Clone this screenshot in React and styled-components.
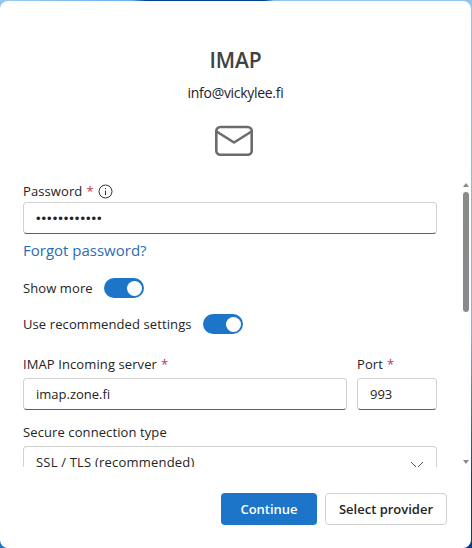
import React from "react"
import styled, { createGlobalStyle } from "styled-components"

const ACCENT = "#1c75c9"

const Required = () => <Star>*</Star>

const MailIcon = () => (
  <svg width="40" height="32" viewBox="0 0 40 32" fill="none" stroke="#6b6b6b" strokeWidth="2.6">
    <rect x="2.3" y="2" width="35.4" height="27.8" rx="4" />
    <path d="M2.5 6.5 L20 17.5 L37.5 6.5" strokeLinejoin="round" />
  </svg>
)

const InfoIcon = () => (
  <svg width="15" height="15" viewBox="0 0 15 15" fill="none" stroke="#333" strokeWidth="1">
    <circle cx="7.5" cy="7.5" r="6.5" />
    <path d="M7.5 6.6 V11" />
    <path d="M7.5 4 V5" />
  </svg>
)

const Chevron = () => (
  <svg width="14" height="8" viewBox="0 0 14 8" fill="none" stroke="#555" strokeWidth="1">
    <path d="M1 1 L7 7 L13 1" />
  </svg>
)

const App = () => (
  <>
    <GlobalStyle />
    <Window>
      <Card>
        <Header>
          <Title>IMAP</Title>
          <Email>info@vickylee.fi</Email>
          <IconWrap><MailIcon /></IconWrap>
        </Header>

        <ScrollArea>
          <Form>
            <Label $tight>Password <Required /> <InfoIcon /></Label>
            <Input><Dots>••••••••••••</Dots></Input>
            <ForgotLink>Forgot password?</ForgotLink>

            <ToggleRow $mt={17}>
              <ToggleLabel>Show more</ToggleLabel>
              <Toggle />
            </ToggleRow>
            <ToggleRow $mt={16}>
              <ToggleLabel>Use recommended settings</ToggleLabel>
              <Toggle />
            </ToggleRow>

            <ServerRow>
              <Field>
                <Label>IMAP Incoming server <Required /></Label>
                <Input>imap.zone.fi</Input>
              </Field>
              <PortField>
                <Label>Port <Required /></Label>
                <Input>993</Input>
              </PortField>
            </ServerRow>

            <Field $mt={11}>
              <Label>Secure connection type</Label>
              <Input>
                <SelectValue>SSL / TLS (recommended)</SelectValue>
                <ChevronWrap><Chevron /></ChevronWrap>
              </Input>
            </Field>
          </Form>
          <ScrollTrack>
            <ArrowUp />
            <Thumb />
            <Spacer />
            <ArrowDown />
          </ScrollTrack>
        </ScrollArea>

        <Footer>
          <PrimaryButton>Continue</PrimaryButton>
          <SecondaryButton>Select provider</SecondaryButton>
        </Footer>
      </Card>
    </Window>
  </>
)

const GlobalStyle = createGlobalStyle`
  html, body {
    margin: 0;
    padding: 0;
    height: 100%;
  }
  body {
    font-family: "Open Sans", "Noto Sans", sans-serif;
    overflow: hidden;
  }
`

const Window = styled.div`
  width: 472px;
  height: 548px;
  background:
    linear-gradient(90deg, #9ccbf0 0%, #6fb0e6 28%, #013f93 31%, #013f93 56%, #8fc4ee 58%, #8fc4ee 100%) top / 100% 1px no-repeat,
    linear-gradient(${ACCENT}, ${ACCENT}) left bottom / 8px 8px no-repeat,
    linear-gradient(180deg, #8fc4ee 0%, #7db6e6 60%, #0b3a86 88%, #0b3a86 100%);
  padding: 1px 1px 0 0;
  box-sizing: border-box;
`

const Card = styled.div`
  height: 547px;
  background: #fff;
  border-radius: 8px;
  display: flex;
  flex-direction: column;
`

const Header = styled.div`
  display: flex;
  flex-direction: column;
  align-items: center;
  padding-top: 44px;
  height: 179px;
  box-sizing: border-box;
  flex: none;
`

const Title = styled.h1`
  margin: 0;
  font-size: 21px;
  line-height: 30px;
  font-weight: 600;
  color: #424242;
  letter-spacing: -0.2px;
`

const Email = styled.div`
  margin-top: 9px;
  font-size: 14px;
  line-height: 18px;
  color: #242424;
  letter-spacing: -0.3px;
`

const IconWrap = styled.div`
  margin: 23px 3px 0 0;
  height: 32px;
`

const ScrollArea = styled.div`
  height: 287px;
  flex: none;
  display: flex;
  overflow: hidden;
`

const Form = styled.div`
  width: 414px;
  margin-left: 23px;
  flex: none;
`

const Label = styled.div`
  display: flex;
  align-items: center;
  gap: 4px;
  height: 22px;
  margin-bottom: ${p => (p.$tight ? 0 : 3)}px;
  font-size: 13px;
  color: #242424;
  letter-spacing: 0.1px;
`

const Star = styled.span`
  color: #c4314b;
`

const Input = styled.div`
  position: relative;
  height: 32px;
  box-sizing: border-box;
  border: 1px solid #d1d1d1;
  border-bottom-color: #616161;
  border-radius: 4px;
  padding: 0 12px;
  display: flex;
  align-items: center;
  font-size: 13px;
  color: #242424;
`

const Dots = styled.span`
  font-family: "Liberation Sans", sans-serif;
  font-size: 13px;
  letter-spacing: 1px;
`

const SelectValue = styled.span`
  letter-spacing: 0.2px;
`

const ForgotLink = styled.div`
  margin-top: 6px;
  font-size: 15px;
  line-height: 21px;
  color: #2b6cb8;
`

const ToggleRow = styled.div`
  display: flex;
  align-items: center;
  height: 20px;
  margin-top: ${p => p.$mt}px;
`

const ToggleLabel = styled.span`
  font-size: 13px;
  color: #242424;
  letter-spacing: 0.1px;
  margin-right: 11.5px;
`

const Toggle = styled.span`
  position: relative;
  width: 40px;
  height: 20px;
  border-radius: 10px;
  background: ${ACCENT};
  &::after {
    content: "";
    position: absolute;
    top: 2.5px;
    right: 2px;
    width: 15px;
    height: 15px;
    border-radius: 50%;
    background: #fff;
  }
`

const ServerRow = styled.div`
  display: flex;
  gap: 10px;
  margin-top: 19px;
`

const Field = styled.div`
  flex: 1;
  margin-top: ${p => p.$mt || 0}px;
`

const PortField = styled.div`
  width: 80px;
  flex: none;
`

const ChevronWrap = styled.span`
  position: absolute;
  right: 12px;
  top: 14px;
  line-height: 0;
`

const ScrollTrack = styled.div`
  width: 8px;
  margin-left: 25px;
  flex: none;
  display: flex;
  flex-direction: column;
  align-items: center;
  padding: 3px 0;
  box-sizing: border-box;
`

const ArrowUp = styled.div`
  width: 0;
  height: 0;
  border-left: 3px solid transparent;
  border-right: 3px solid transparent;
  border-bottom: 4px solid #8a8a8a;
`

const ArrowDown = styled.div`
  width: 0;
  height: 0;
  border-left: 3px solid transparent;
  border-right: 3px solid transparent;
  border-top: 4px solid #8a8a8a;
`

const Thumb = styled.div`
  width: 6px;
  height: 120px;
  margin-top: 5px;
  border-radius: 3px;
  background: #8a8a8a;
`

const Spacer = styled.div`
  flex: 1;
`

const Footer = styled.div`
  flex: 1;
  display: flex;
  justify-content: flex-end;
  gap: 8px;
  padding: 26px 24px 0 0;
`

const PrimaryButton = styled.button`
  width: 96px;
  height: 32px;
  padding: 0;
  border: none;
  border-radius: 4px;
  background: ${ACCENT};
  color: #fff;
  font: 600 13px "Open Sans", sans-serif;
`

const SecondaryButton = styled.button`
  width: 122px;
  height: 32px;
  padding: 0;
  border: 1px solid #d1d1d1;
  border-radius: 4px;
  background: #fff;
  color: #242424;
  font: 600 13px "Open Sans", sans-serif;
`

export default App
